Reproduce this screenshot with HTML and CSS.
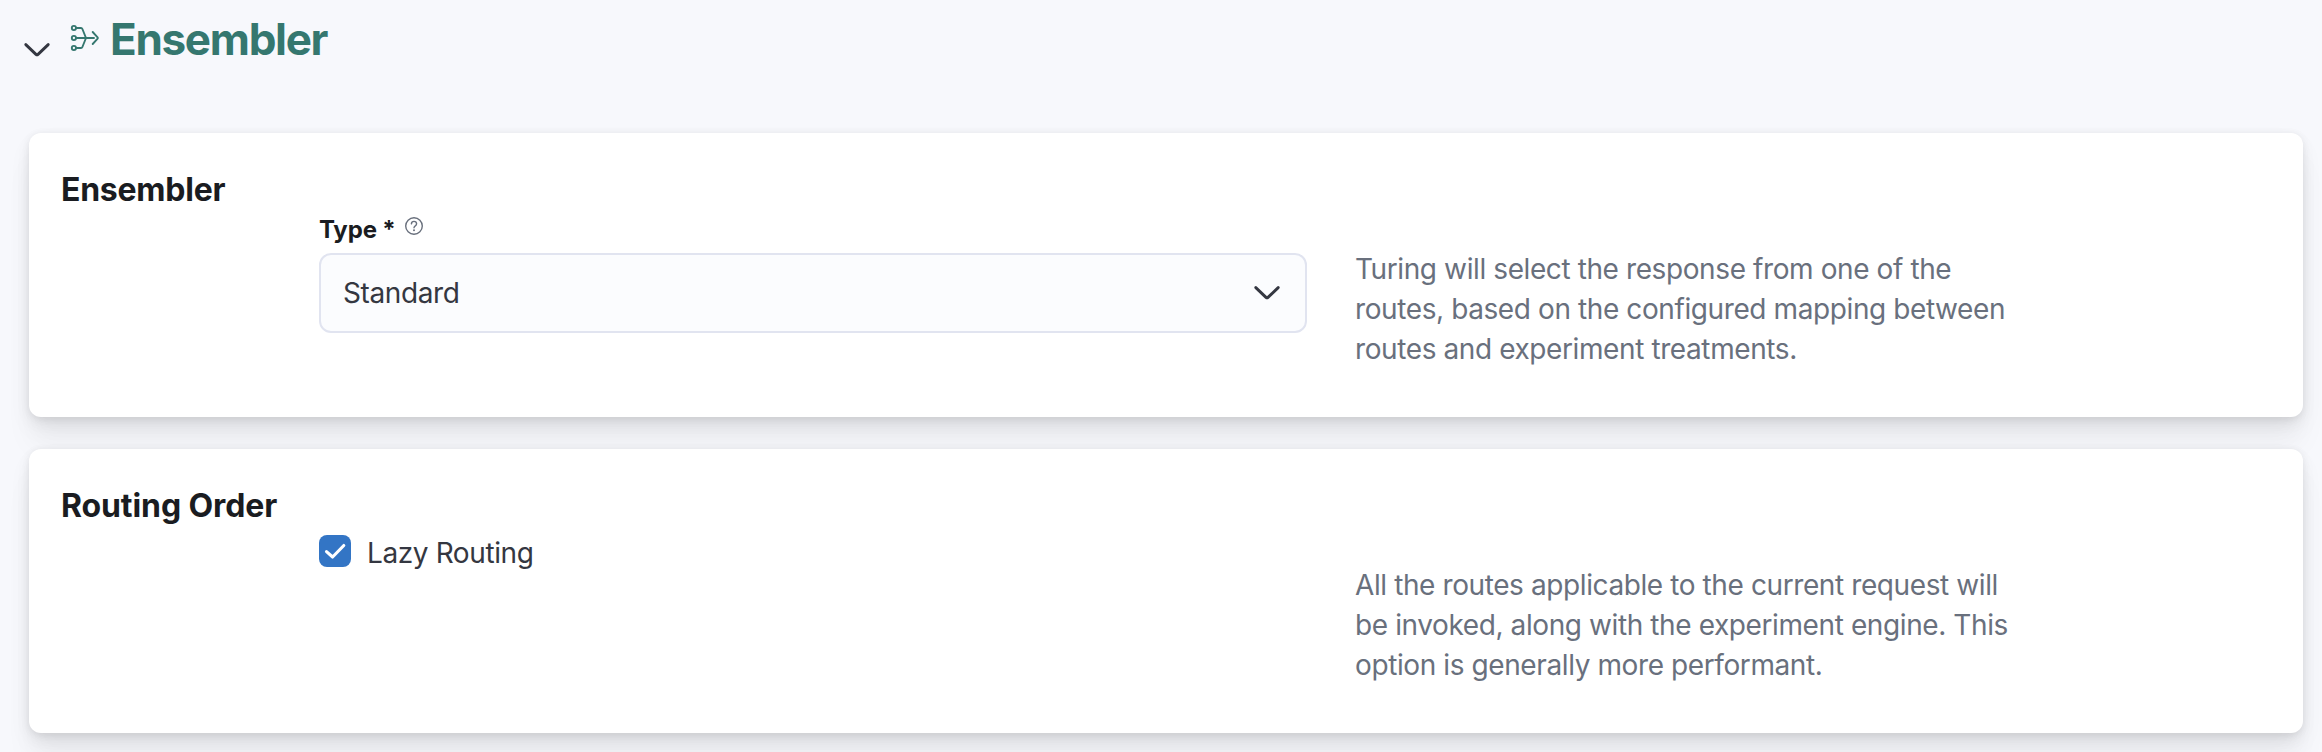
FILE: index.html
```
<!DOCTYPE html>
<html lang="en">
<head>
<meta charset="utf-8">
<title>Ensembler</title>
<link rel="stylesheet" href="styles.css">
</head>
<body>
<header class="accordion-header">
  <svg class="toggle" width="32" height="32" viewBox="0 0 32 32"><path d="M4.8 10.6 L15 20.4 Q16 21.3 17 20.4 L27.2 10.6"/></svg>
  <svg class="ensembler-icon" width="32" height="32" viewBox="0 0 32 32">
    <circle cx="4.9" cy="6" r="2.1"/><circle cx="4.9" cy="16" r="2.1"/><circle cx="4.9" cy="26" r="2.1"/>
    <path d="M7 6H12Q13 6 13.4 7L17 16L13.4 25Q13 26 12 26H7M7 16H25M23.7 10L28.6 15.3Q29.2 16 28.6 16.7L23.7 22"/>
  </svg>
  <h1 class="page-title">Ensembler</h1>
</header>
<main class="panels">
  <section class="panel">
    <h2 class="panel-title">Ensembler</h2>
    <div class="panel-row">
      <div class="field">
        <div class="label-row">
          <label class="label">Type *</label>
          <svg class="help" width="18" height="18" viewBox="0 0 18 18"><circle cx="9" cy="9" r="8.3"/><path d="M6.4 6.9Q6.5 4.4 9 4.4T11.6 6.8Q11.6 8 10.3 8.8T9 10.8"/><circle class="dot" cx="9" cy="13.2" r="1"/></svg>
        </div>
        <div class="select">
          <span>Standard</span>
          <svg class="chevron" width="32" height="32" viewBox="0 0 32 32"><path d="M4.8 10.6 L15 20.4 Q16 21.3 17 20.4 L27.2 10.6"/></svg>
        </div>
      </div>
      <p class="description">Turing will select the response from one of the<br>routes, based on the configured mapping between<br>routes and experiment treatments.</p>
    </div>
  </section>
  <section class="panel">
    <h2 class="panel-title routing">Routing Order</h2>
    <div class="panel-row">
      <div class="field">
        <label class="checkbox">
          <svg width="32" height="32" viewBox="0 0 32 32"><rect width="32" height="32" rx="8"/><path d="M7.5 16.6L13.6 22L24.8 10.5"/></svg>
          <span>Lazy Routing</span>
        </label>
      </div>
      <p class="description">All the routes applicable to the current request will<br>be invoked, along with the experiment engine. This<br>option is generally more performant.</p>
    </div>
  </section>
</main>
</body>
</html>
```
FILE: styles.css
```
* { box-sizing: border-box; }
body {
  margin: 0;
  height: 752px;
  overflow: hidden;
  background: #f7f8fc;
  font-family: Inter, sans-serif;
  font-size: 28px;
  font-weight: 430;
  line-height: 40px;
  letter-spacing: -.4px;
  color: #343741;
}
h1, h2, p { margin: 0; }
svg { display: block; flex: none; fill: none; stroke-linecap: round; stroke-linejoin: round; }
.accordion-header {
  display: flex;
  align-items: flex-start;
  height: 133px;
  padding: 11px 0 0 21px;
}
.toggle, .chevron { stroke: #343741; stroke-width: 2.9; }
.toggle { margin-top: 23px; }
.ensembler-icon { margin: 11px 0 0 16px; stroke: #35776f; stroke-width: 1.9; }
.page-title {
  margin-left: 9px;
  font-size: 44px;
  line-height: 56px;
  font-weight: 700;
  letter-spacing: -1.3px;
  color: #35776f;
}
.panels { display: flex; flex-direction: column; gap: 32px; padding: 0 19px 0 29px; }
.panel {
  height: 284px;
  padding: 33px 32px 31px;
  border-radius: 12px;
  background: #fff;
  box-shadow: 0 1.8px 8px -1px rgba(0,0,0,.08), 0 5.2px 16px -1px rgba(0,0,0,.06),
    0 11.4px 24px -1px rgba(0,0,0,.05), 0 30px 30px -1px rgba(0,0,0,.04);
}
.panel-title {
  font-size: 32px;
  line-height: 48px;
  font-weight: 700;
  letter-spacing: -.25px;
  color: #1a1c21;
}
.panel-title.routing { letter-spacing: -.1px; }
.panel-row { display: grid; grid-template-columns: 988px 1fr; column-gap: 48px; padding-left: 258px; }
.label-row { display: flex; height: 39px; gap: 9px; }
.label { font-size: 24px; line-height: 32px; font-weight: 700; letter-spacing: -.15px; color: #1a1c21; }
.help { margin-top: 3px; stroke: #69707d; stroke-width: 1.4; }
.help .dot { fill: #69707d; stroke: none; }
.select {
  display: flex;
  align-items: center;
  justify-content: space-between;
  height: 80px;
  padding: 0 22px;
  border: 2px solid #e1e4f0;
  border-radius: 12px;
  background: #fbfcfe;
}
.description { padding-top: 35px; color: #69707d; }
.checkbox { display: flex; gap: 16px; margin-top: 5px; line-height: 36px; }
.checkbox rect { fill: #3375c5; }
.checkbox path { stroke: #fff; stroke-width: 3.1; }
```
